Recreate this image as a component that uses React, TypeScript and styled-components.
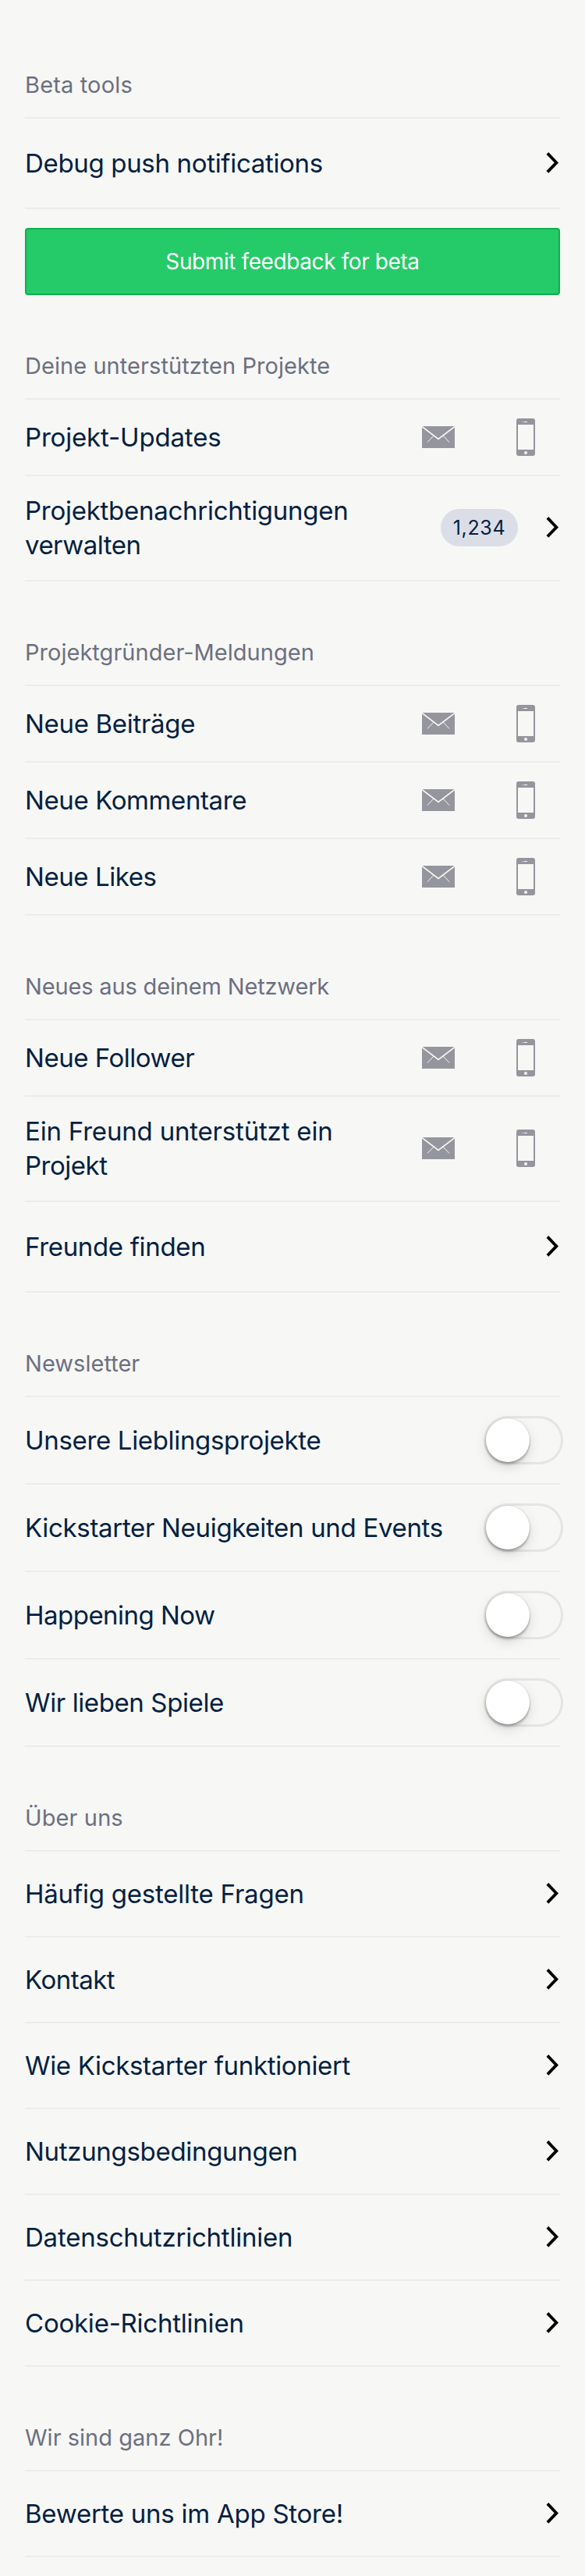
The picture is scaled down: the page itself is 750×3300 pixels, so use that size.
import React from 'react';
import styled, { createGlobalStyle } from 'styled-components';

const GlobalStyle = createGlobalStyle`
  *, *::before, *::after { box-sizing: border-box; }
  html, body { margin: 0; background: #f7f7f5; }
  body { font-family: Inter, "Liberation Sans", sans-serif; }
`;

const Page = styled.main`
  width: 750px;
  min-height: 3300px;
  padding: 18px 32px 0;
  background: #f7f7f5;
`;

const Section = styled.section`
  display: flex;
  flex-direction: column;
`;

const Title = styled.h2<{ $tracking: number }>`
  display: flex;
  align-items: flex-end;
  height: 134px;
  margin: 0;
  padding-bottom: 23px;
  border-bottom: 2px solid #ececea;
  color: #6b7081;
  font-size: 29px;
  font-weight: 400;
  line-height: 36px;
  letter-spacing: ${(p) => p.$tracking}px;
`;

const Row = styled.div<{ $height: number }>`
  display: flex;
  align-items: center;
  height: ${(p) => p.$height}px;
  border-bottom: 2px solid #ececea;
`;

const TwoLineRow = styled(Row)`
  padding-bottom: 1px;
`;

const Label = styled.span<{ $tracking: number }>`
  flex: 1;
  color: #032141;
  font-size: 33px;
  line-height: 44px;
  letter-spacing: ${(p) => p.$tracking}px;
  white-space: nowrap;
`;

const Line = styled.span<{ $tracking: number }>`
  display: block;
  letter-spacing: ${(p) => p.$tracking}px;
`;

const ChannelIcons = styled.div`
  display: flex;
  align-items: center;
  gap: 79px;
  margin-right: 32px;
`;

const Icon = styled.svg`
  display: block;
  flex: none;
`;

const Badge = styled.span`
  width: 99px;
  height: 48px;
  margin-right: 36px;
  border-radius: 24px;
  background: #dcdee7;
  color: #032141;
  font-size: 25px;
  line-height: 48px;
  letter-spacing: 0.7px;
  text-align: center;
`;

const Track = styled.span`
  display: block;
  width: 102px;
  height: 62px;
  margin-right: -4px;
  padding: 3px;
  border-radius: 31px;
  box-shadow: inset 0 0 0 3px #e5e5e4;
`;

const Knob = styled.span`
  display: block;
  width: 56px;
  height: 56px;
  border-radius: 50%;
  background: #fff;
  box-shadow: 0 0 0 1px rgba(0, 0, 0, 0.04), 0 6px 16px rgba(0, 0, 0, 0.13), 0 5px 3px rgba(0, 0, 0, 0.06),
    0 2px 3px rgba(0, 0, 0, 0.25);
`;

const FeedbackButton = styled.button`
  height: 86px;
  margin: 24px 0 0;
  padding: 0;
  border: 2px solid #0db14b;
  border-radius: 4px;
  background: #25cb68;
  color: #fff;
  font: 400 28px/36px Inter, "Liberation Sans", sans-serif;
  letter-spacing: -0.4px;
`;

const Chevron = () => (
  <Icon width="18" height="30" viewBox="0 0 18 30">
    <path d="M1.9 2.4 L13.4 14.4 L1.9 26.4" fill="none" stroke="#000" strokeWidth="3.8" />
  </Icon>
);

const Mail = () => (
  <Icon width="42" height="28" viewBox="0 0 42 28">
    <path d="M0 0H42V28H0Z" fill="#95959e" />
    <path d="M0 0.5L21 16.5L42 0.5" fill="none" stroke="#f7f7f5" strokeWidth="1.7" />
    <path d="M15 12L7 20.5M27 12L35 20.5" fill="none" stroke="#f7f7f5" strokeWidth="1" />
  </Icon>
);

const Phone = () => (
  <Icon width="24" height="48" viewBox="0 0 24 48">
    <rect width="24" height="48" rx="3" fill="#95959e" />
    <path d="M2 8H22V40H2Z" fill="#f7f7f5" />
    <circle cx="12" cy="44" r="2" fill="#f7f7f5" />
    <path d="M8 4.5H9M10 4.5H14" stroke="#f7f7f5" strokeWidth="1" />
  </Icon>
);

type ItemProps = { text: string; tracking: number };

const LinkRow = ({ text, tracking, height = 110 }: ItemProps & { height?: number }) => (
  <Row $height={height}>
    <Label $tracking={tracking}>{text}</Label>
    <Chevron />
  </Row>
);

const ChannelRow = ({ text, tracking }: ItemProps) => (
  <Row $height={98}>
    <Label $tracking={tracking}>{text}</Label>
    <ChannelIcons>
      <Mail />
      <Phone />
    </ChannelIcons>
  </Row>
);

const SwitchRow = ({ text, tracking }: ItemProps) => (
  <Row $height={112}>
    <Label $tracking={tracking}>{text}</Label>
    <Track role="switch" aria-checked={false} aria-label={text}>
      <Knob />
    </Track>
  </Row>
);

export default function App() {
  return (
    <>
      <GlobalStyle />
      <Page>
        <Section>
          <Title $tracking={0.16}>Beta tools</Title>
          <LinkRow text="Debug push notifications" tracking={-0.33} height={116} />
          <FeedbackButton>Submit feedback for beta</FeedbackButton>
        </Section>
        <Section>
          <Title $tracking={0.06}>Deine unterstützten Projekte</Title>
          <ChannelRow text="Projekt-Updates" tracking={-0.17} />
          <TwoLineRow $height={135}>
            <Label $tracking={0}>
              <Line $tracking={-0.26}>Projektbenachrichtigungen</Line>
              <Line $tracking={-0.52}>verwalten</Line>
            </Label>
            <Badge>1,234</Badge>
            <Chevron />
          </TwoLineRow>
        </Section>
        <Section>
          <Title $tracking={0.03}>Projektgründer-Meldungen</Title>
          <ChannelRow text="Neue Beiträge" tracking={-0.31} />
          <ChannelRow text="Neue Kommentare" tracking={-0.39} />
          <ChannelRow text="Neue Likes" tracking={-0.43} />
        </Section>
        <Section>
          <Title $tracking={-0.16}>Neues aus deinem Netzwerk</Title>
          <ChannelRow text="Neue Follower" tracking={-0.48} />
          <TwoLineRow $height={135}>
            <Label $tracking={0}>
              <Line $tracking={-0.19}>Ein Freund unterstützt ein</Line>
              <Line $tracking={-0.48}>Projekt</Line>
            </Label>
            <ChannelIcons>
              <Mail />
              <Phone />
            </ChannelIcons>
          </TwoLineRow>
          <LinkRow text="Freunde finden" tracking={-0.33} height={116} />
        </Section>
        <Section>
          <Title $tracking={0.03}>Newsletter</Title>
          <SwitchRow text="Unsere Lieblingsprojekte" tracking={-0.33} />
          <SwitchRow text="Kickstarter Neuigkeiten und Events" tracking={-0.32} />
          <SwitchRow text="Happening Now" tracking={-0.52} />
          <SwitchRow text="Wir lieben Spiele" tracking={-0.39} />
        </Section>
        <Section>
          <Title $tracking={0.11}>Über uns</Title>
          <LinkRow text="Häufig gestellte Fragen" tracking={-0.22} />
          <LinkRow text="Kontakt" tracking={-0.49} />
          <LinkRow text="Wie Kickstarter funktioniert" tracking={-0.33} />
          <LinkRow text="Nutzungsbedingungen" tracking={-0.31} />
          <LinkRow text="Datenschutzrichtlinien" tracking={-0.22} />
          <LinkRow text="Cookie-Richtlinien" tracking={-0.23} />
        </Section>
        <Section>
          <Title $tracking={0.02}>Wir sind ganz Ohr!</Title>
          <LinkRow text="Bewerte uns im App Store!" tracking={-0.25} />
        </Section>
      </Page>
    </>
  );
}
